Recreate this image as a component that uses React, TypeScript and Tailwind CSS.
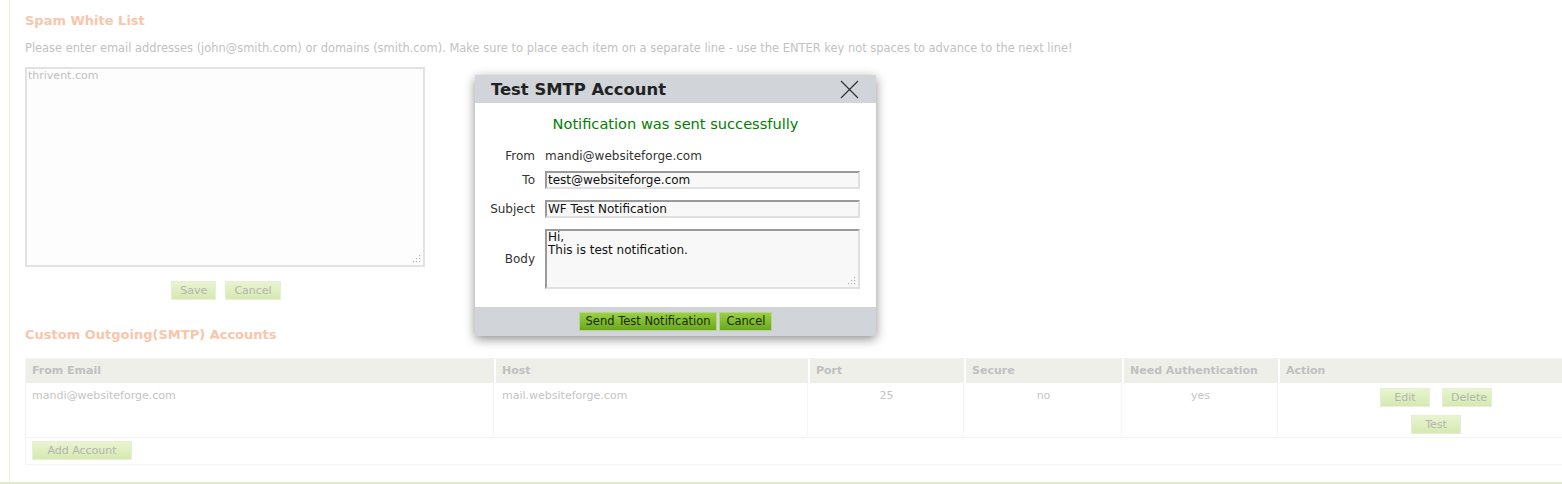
const fadedBtn =
  "h-[19px] px-2 text-[11px] text-[#b4b4b4] bg-gradient-to-b from-[#e8f4d0] to-[#d6e9b0] border border-[#e6efd6] leading-none";

const greenBtn =
  "h-[19px] px-[6px] text-[11.5px] text-[#1a2a00] bg-gradient-to-b from-[#9ad043] to-[#6aa81c] border border-[#b8d38a] leading-none";

const insetBox =
  "border-2 border-t-[#9a9a9a] border-l-[#9a9a9a] border-r-[#e0e0e0] border-b-[#e0e0e0] bg-[#f8f8f8] px-[1px] text-[12px] text-[#111] outline-none";

function Field({ label, children, className }: { label: string; children: React.ReactNode; className?: string }) {
  return (
    <div className={`flex items-center gap-[10px] ${className ?? ""}`}>
      <div className="w-[60px] text-right text-[12px] text-[#333]">{label}</div>
      {children}
    </div>
  );
}

function Grip() {
  return (
    <svg width="8" height="8" viewBox="0 0 8 8" className="pointer-events-none absolute bottom-[4px] right-[4px]">
      <g fill="#b5b5b5">
        <rect x="6" y="0" width="1.2" height="1.2" />
        <rect x="3" y="3" width="1.2" height="1.2" />
        <rect x="6" y="3" width="1.2" height="1.2" />
        <rect x="0" y="6" width="1.2" height="1.2" />
        <rect x="3" y="6" width="1.2" height="1.2" />
        <rect x="6" y="6" width="1.2" height="1.2" />
      </g>
    </svg>
  );
}

export default function App() {
  return (
    <div className="relative h-[484px] w-[1562px] overflow-hidden bg-white font-['DejaVu_Sans',sans-serif]">
      <div className="ml-[9px] h-[482px] w-[1700px] border-l border-[#ecebe2] pl-[15px] pt-[11px]">
        <h2 className="text-[13px] font-bold text-[#f8c6aa]">Spam White List</h2>
        <p className="mt-[9px] text-[11.45px] text-[#c2c2c2]">
          Please enter email addresses (john@smith.com) or domains (smith.com). Make sure to place each item on a separate line - use the ENTER key not spaces to advance to the next line!
        </p>
        <div className="relative mt-[10px] h-[200px] w-[400px]">
          <textarea
            readOnly
            defaultValue="thrivent.com"
            className="block h-full w-full resize-none border-2 border-[#e2e2e2] bg-[#fdfdfd] px-[1px] text-[11px] leading-[14px] text-[#c0c0c0] outline-none"
          />
          <Grip />
        </div>
        <div className="mt-[14px] flex w-[400px] justify-center gap-[9px] pl-[2px]">
          <button className={fadedBtn}>Save</button>
          <button className={fadedBtn}>Cancel</button>
        </div>

        <h2 className="mt-[25px] text-[13px] font-bold text-[#f8c6aa]">Custom Outgoing(SMTP) Accounts</h2>

        <div className="mt-[14px] border border-[#f4f4f4]">
          <div className="grid grid-cols-[468px_312px_154px_156px_154px_312px] gap-x-[2px] bg-white text-[11px] font-bold text-[#c0c0c0]">
            <div className="h-[24px] bg-[#efefea] pl-[6px] leading-[24px]">From Email</div>
            <div className="h-[24px] bg-[#efefea] pl-[6px] leading-[24px]">Host</div>
            <div className="h-[24px] bg-[#efefea] pl-[6px] leading-[24px]">Port</div>
            <div className="h-[24px] bg-[#efefea] pl-[6px] leading-[24px]">Secure</div>
            <div className="h-[24px] bg-[#efefea] pl-[6px] leading-[24px]">Need Authentication</div>
            <div className="h-[24px] bg-[#efefea] pl-[6px] leading-[24px]">Action</div>
          </div>
          <div className="grid h-[55px] grid-cols-[468px_312px_154px_156px_154px_312px] gap-x-[2px] border-b border-[#f4f4f4] text-[11px] text-[#c4c4c4]">
            <div className="border-r border-[#f6f6f6] pl-[6px] pt-[5px]">mandi@websiteforge.com</div>
            <div className="border-r border-[#f6f6f6] pl-[6px] pt-[5px]">mail.websiteforge.com</div>
            <div className="border-r border-[#f6f6f6] pt-[5px] text-center">25</div>
            <div className="border-r border-[#f6f6f6] pt-[5px] text-center">no</div>
            <div className="border-r border-[#f6f6f6] pt-[5px] text-center">yes</div>
            <div className="flex flex-col items-center gap-[8px] pt-[5px]">
              <div className="flex gap-[12px]">
                <button className={`${fadedBtn} w-[50px]`}>Edit</button>
                <button className={`${fadedBtn} w-[50px]`}>Delete</button>
              </div>
              <button className={`${fadedBtn} w-[50px]`}>Test</button>
            </div>
          </div>
          <div className="flex h-[26px] items-start pl-[6px] pt-[3px]">
            <button className={`${fadedBtn} w-[100px]`}>Add Account</button>
          </div>
        </div>
      </div>
      <div className="h-[2px] bg-[#e0ebc8]" />

      {/* Test SMTP dialog */}
      <div className="absolute left-[475px] top-[75px] w-[401px] bg-white shadow-[0_3px_10px_rgba(0,0,0,0.45)]">
        <div className="flex h-[28px] items-center justify-between bg-[#d1d4d8] pl-[16px] pr-[17px] pt-[2px]">
          <span className="text-[16.4px] font-bold text-[#222]">Test SMTP Account</span>
          <svg width="19" height="19" viewBox="0 0 19 19" className="mb-[2px]">
            <path d="M1 1 18 18M18 1 1 18" stroke="#333" strokeWidth="1.2" fill="none" />
          </svg>
        </div>
        <div className="pb-[18px] pt-[12px]">
          <div className="text-center text-[14.6px] leading-[18px] text-[#008000]">Notification was sent successfully</div>
          <Field label="From" className="mt-[15px] h-[15px]">
            <span className="text-[12px] text-[#333]">mandi@websiteforge.com</span>
          </Field>
          <Field label="To" className="mt-[8px]">
            <input readOnly defaultValue="test@websiteforge.com" className={`h-[18px] w-[315px] ${insetBox}`} />
          </Field>
          <Field label="Subject" className="mt-[11px]">
            <input readOnly defaultValue="WF Test Notification" className={`h-[18px] w-[315px] ${insetBox}`} />
          </Field>
          <Field label="Body" className="mt-[11px]">
            <div className="relative h-[60px] w-[315px]">
              <textarea
                readOnly
                defaultValue={"Hi,\nThis is test notification."}
                className={`block h-full w-full resize-none leading-[13px] ${insetBox}`}
              />
              <Grip />
            </div>
          </Field>
        </div>
        <div className="flex h-[29px] items-center justify-center gap-[2px] bg-[#d1d4d8]">
          <button className={greenBtn}>Send Test Notification</button>
          <button className={greenBtn}>Cancel</button>
        </div>
      </div>
    </div>
  );
}
